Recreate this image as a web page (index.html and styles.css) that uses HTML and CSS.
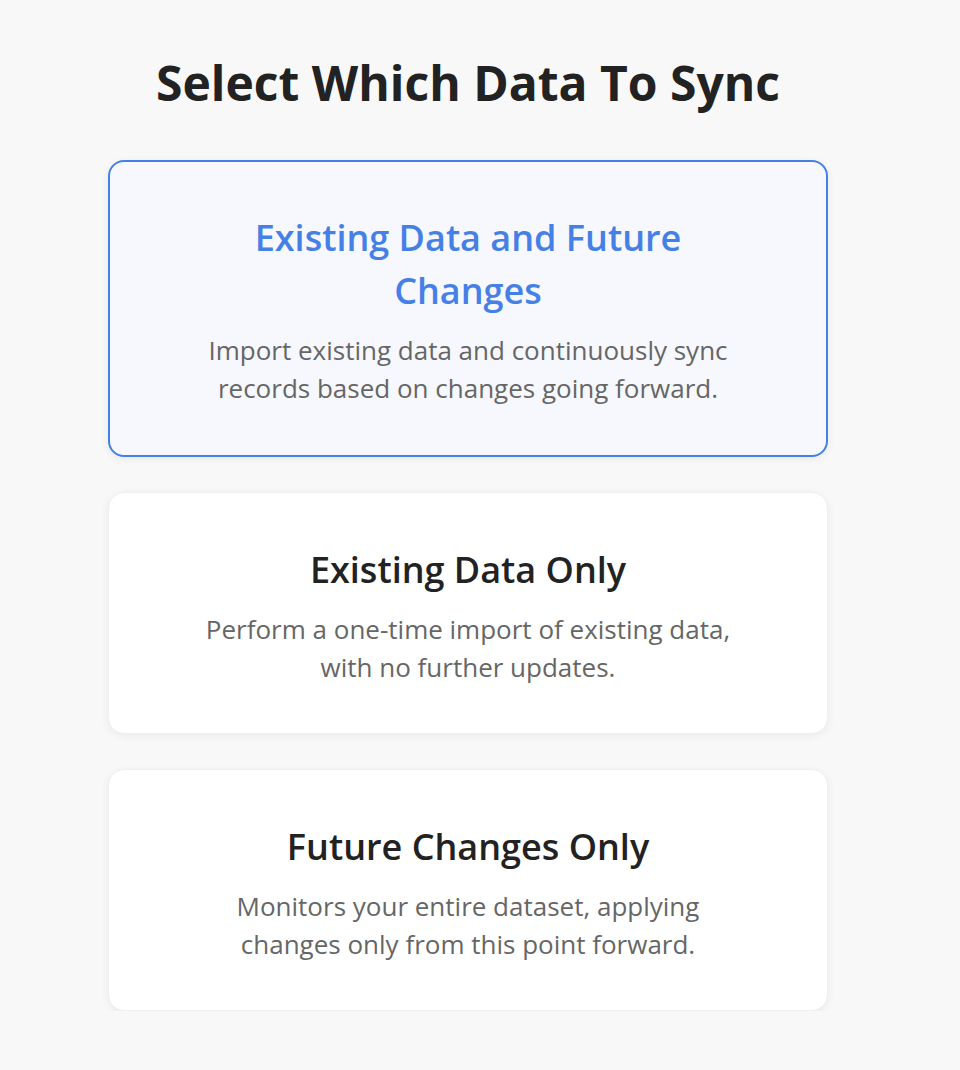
FILE: index.html
```html
<!DOCTYPE html>
<html lang="en">
<head>
  <meta charset="UTF-8">
  <title>Select Which Data To Sync</title>
  <link rel="stylesheet" href="styles.css">
</head>
<body>

<div class="page">
  <h1>Select Which Data To Sync</h1>

  <div class="options">
    <div class="option selected">
      <h2>Existing Data and Future Changes</h2>
      <p>Import existing data and continuously sync records based on changes going forward.</p>
    </div>
    <div class="option">
      <h2>Existing Data Only</h2>
      <p>Perform a one-time import of existing data, with no further updates.</p>
    </div>
    <div class="option">
      <h2>Future Changes Only</h2>
      <p>Monitors your entire dataset, applying changes only from this point forward.</p>
    </div>
  </div>
</div>

</body>
</html>
```

FILE: styles.css
```css
body {
  margin: 0;
  padding: 0 24px 0 0;
  font-family: "Open Sans", Arial, sans-serif;
  background: #f8f8f8;
  color: #222;
}
.page {
  max-width: 720px;
  margin: 0 auto;
  padding-top: 48px;
}
h1 {
  text-align: center;
  font-size: 48px;
  font-weight: 700;
  line-height: 70px;
  margin: 0 0 42px;
}
.options {
  display: flex;
  flex-direction: column;
  gap: 35px;
}
.option {
  background: #fff;
  border: 1px solid #efefef;
  border-radius: 16px;
  box-shadow: 0 2px 8px rgba(0, 0, 0, 0.06);
  padding: 50px 90px 47px;
  text-align: center;
}
.option.selected {
  background: #f6f8fd;
  border: 2px solid #4580e6;
  padding: 49px 90px 48px;
}
.option h2 {
  font-size: 36px;
  font-weight: 600;
  line-height: 53px;
  margin: 0 0 14px;
}
.option.selected h2 {
  color: #4580e6;
}
.option p {
  font-size: 26px;
  line-height: 38px;
  color: #666;
  margin: 0;
}
```
